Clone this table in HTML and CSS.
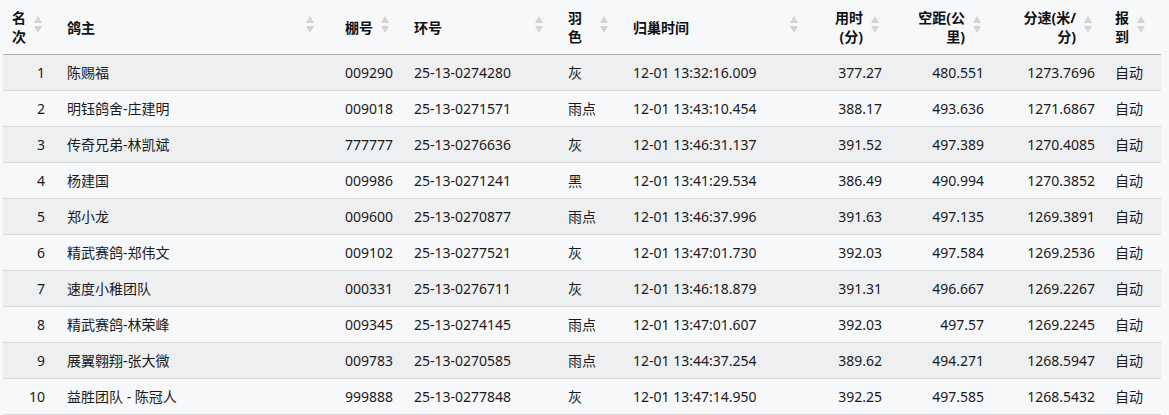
FILE: index.html
```html
<!DOCTYPE html>
<html lang="zh-CN">
<head>
<meta charset="utf-8">
<title>成绩</title>
<link rel="stylesheet" href="styles.css">
</head>
<body>
<div class="wrap">
<table class="results">
  <colgroup>
    <col class="w-rank"><col class="w-owner"><col class="w-loft"><col class="w-ring"><col class="w-color"><col class="w-time"><col class="w-min"><col class="w-dist"><col class="w-speed"><col class="w-rep">
  </colgroup>
  <thead>
    <tr>
      <th class="num">名<br>次<span class="sort"></span></th>
      <th class="wide">鸽主<span class="sort"></span></th>
      <th>棚号<span class="sort"></span></th>
      <th>环号<span class="sort"></span></th>
      <th>羽<br>色<span class="sort"></span></th>
      <th>归巢时间<span class="sort"></span></th>
      <th class="num">用时<br>(分)<span class="sort"></span></th>
      <th class="num">空距(公<br>里)<span class="sort"></span></th>
      <th class="num">分速(米/<br>分)<span class="sort"></span></th>
      <th class="last">报<br>到<span class="sort"></span></th>
    </tr>
  </thead>
  <tbody>
    <tr><td class="num">1</td><td>陈赐福</td><td>009290</td><td>25-13-0274280</td><td>灰</td><td>12-01 13:32:16.009</td><td class="num">377.27</td><td class="num">480.551</td><td class="num">1273.7696</td><td class="last">自动</td></tr>
    <tr><td class="num">2</td><td>明钰鸽舍-庄建明</td><td>009018</td><td>25-13-0271571</td><td>雨点</td><td>12-01 13:43:10.454</td><td class="num">388.17</td><td class="num">493.636</td><td class="num">1271.6867</td><td class="last">自动</td></tr>
    <tr><td class="num">3</td><td>传奇兄弟-林凯斌</td><td>777777</td><td>25-13-0276636</td><td>灰</td><td>12-01 13:46:31.137</td><td class="num">391.52</td><td class="num">497.389</td><td class="num">1270.4085</td><td class="last">自动</td></tr>
    <tr><td class="num">4</td><td>杨建国</td><td>009986</td><td>25-13-0271241</td><td>黑</td><td>12-01 13:41:29.534</td><td class="num">386.49</td><td class="num">490.994</td><td class="num">1270.3852</td><td class="last">自动</td></tr>
    <tr><td class="num">5</td><td>郑小龙</td><td>009600</td><td>25-13-0270877</td><td>雨点</td><td>12-01 13:46:37.996</td><td class="num">391.63</td><td class="num">497.135</td><td class="num">1269.3891</td><td class="last">自动</td></tr>
    <tr><td class="num">6</td><td>精武赛鸽-郑伟文</td><td>009102</td><td>25-13-0277521</td><td>灰</td><td>12-01 13:47:01.730</td><td class="num">392.03</td><td class="num">497.584</td><td class="num">1269.2536</td><td class="last">自动</td></tr>
    <tr><td class="num">7</td><td>速度小稚团队</td><td>000331</td><td>25-13-0276711</td><td>灰</td><td>12-01 13:46:18.879</td><td class="num">391.31</td><td class="num">496.667</td><td class="num">1269.2267</td><td class="last">自动</td></tr>
    <tr><td class="num">8</td><td>精武赛鸽-林荣峰</td><td>009345</td><td>25-13-0274145</td><td>雨点</td><td>12-01 13:47:01.607</td><td class="num">392.03</td><td class="num">497.57</td><td class="num">1269.2245</td><td class="last">自动</td></tr>
    <tr><td class="num">9</td><td>展翼翱翔-张大微</td><td>009783</td><td>25-13-0270585</td><td>雨点</td><td>12-01 13:44:37.254</td><td class="num">389.62</td><td class="num">494.271</td><td class="num">1268.5947</td><td class="last">自动</td></tr>
    <tr><td class="num">10</td><td>益胜团队 - 陈冠人</td><td>999888</td><td>25-13-0277848</td><td>灰</td><td>12-01 13:47:14.950</td><td class="num">392.25</td><td class="num">497.585</td><td class="num">1268.5432</td><td class="last">自动</td></tr>
  </tbody>
</table>
</div>
</body>
</html>
```
FILE: styles.css
```css
html, body {
  margin: 0;
  padding: 0;
  background: #f7f8fa;
}
body {
  font-family: "Noto Sans", "Noto Sans CJK SC", sans-serif;
  font-size: 14px;
  color: #1a1a1a;
}
.wrap {
  padding: 0 8px 0 3px;
}
.results {
  width: 1158px;
  border-collapse: collapse;
  table-layout: fixed;
}
.w-rank { width: 55px; }
.w-owner { width: 278px; }
.w-loft { width: 69px; }
.w-ring { width: 154px; }
.w-color { width: 65px; }
.w-time { width: 190px; }
.w-min { width: 81px; }
.w-dist { width: 102px; }
.w-speed { width: 111px; }
.w-rep { width: 53px; }

.results th {
  position: relative;
  height: 54px;
  box-sizing: border-box;
  padding: 8px 32px 8px 9px;
  text-align: left;
  font-weight: bold;
  line-height: 19px;
  color: #111;
  white-space: nowrap;
  vertical-align: middle;
  border-bottom: 1px solid #acacac;
}
.results th.num { text-align: right; }
.results th.last { padding-left: 7px; }
.sort {
  position: absolute;
  right: 16px;
  top: 50%;
  margin-top: -11px;
  width: 8px;
  height: 17px;
}
.results th.wide .sort { right: 22px; }
.sort::before,
.sort::after {
  content: "";
  position: absolute;
  left: 0;
  border-left: 4px solid transparent;
  border-right: 4px solid transparent;
}
.sort::before {
  top: 0;
  border-bottom: 7px solid #d4d4d6;
}
.sort::after {
  bottom: 0;
  border-top: 7px solid #d4d4d6;
}

.results td {
  height: 35px;
  padding: 0 9px;
  line-height: 20px;
  white-space: nowrap;
  vertical-align: middle;
  border-bottom: 1px solid #d9d9db;
}
.results td.num {
  text-align: right;
  padding-right: 13px;
}
.results td.last { padding-left: 7px; }
.results tbody tr:nth-child(odd) td {
  background: #eeeff1;
}
```
